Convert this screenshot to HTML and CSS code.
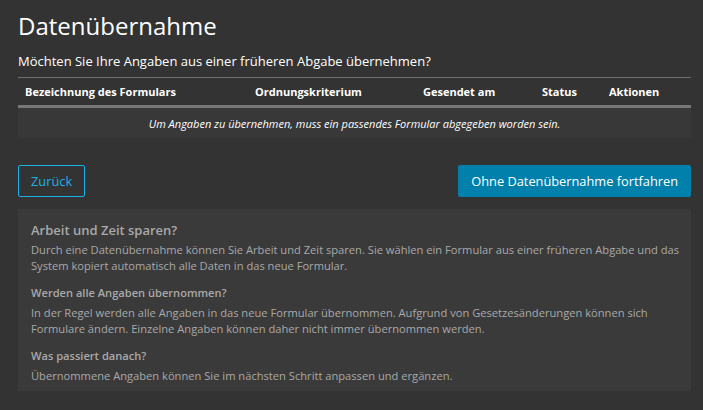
FILE: index.html
```html
<!DOCTYPE html>
<html lang="de">
<head>
    <meta charset="UTF-8">
    <meta name="viewport" content="width=device-width, initial-scale=1.0">
    <title>Datenübernahme</title>
    <link rel="stylesheet" href="styles.css">
</head>
<body>

    <div class="container">
        <h1>Datenübernahme</h1>
        <p class="question">Möchten Sie Ihre Angaben aus einer früheren Abgabe übernehmen?</p>

        <!-- Formular-Tabelle -->
        <table class="forms">
            <thead>
                <tr>
                    <th class="col-name">Bezeichnung des Formulars</th>
                    <th class="col-order">Ordnungskriterium</th>
                    <th class="col-date">Gesendet am</th>
                    <th class="col-status">Status</th>
                    <th class="col-actions">Aktionen</th>
                </tr>
            </thead>
            <tbody>
                <tr class="empty">
                    <td colspan="5">Um Angaben zu übernehmen, muss ein passendes Formular abgegeben worden sein.</td>
                </tr>
            </tbody>
        </table>

        <div class="actions">
            <button class="btn btn-outline">Zurück</button>
            <button class="btn btn-primary">Ohne Datenübernahme fortfahren</button>
        </div>

        <!-- Hinweise -->
        <div class="info">
            <h3>Arbeit und Zeit sparen?</h3>
            <p>Durch eine Datenübernahme können Sie Arbeit und Zeit sparen. Sie wählen ein Formular aus einer früheren Abgabe und das System kopiert automatisch alle Daten in das neue Formular.</p>
            <h4>Werden alle Angaben übernommen?</h4>
            <p>In der Regel werden alle Angaben in das neue Formular übernommen. Aufgrund von Gesetzesänderungen können sich Formulare ändern. Einzelne Angaben können daher nicht immer übernommen werden.</p>
            <h4>Was passiert danach?</h4>
            <p>Übernommene Angaben können Sie im nächsten Schritt anpassen und ergänzen.</p>
        </div>
    </div>

</body>
</html>
```

FILE: styles.css
```css
/* General Styles */
body {
    font-family: "Open Sans", Arial, sans-serif;
    background-color: #333333;
    color: #ffffff;
    margin: 0;
    padding: 0;
}

.container {
    padding: 9px 12px 0 18px;
}

h1 {
    font-size: 24px;
    font-weight: 400;
    margin: 0 0 8px 0;
    line-height: 34px;
}

.question {
    font-size: 13px;
    margin: 0 0 6px 0;
    line-height: 20px;
}

/* Table */
.forms {
    width: 100%;
    border-collapse: collapse;
    border-top: 1px solid #6e6e6e;
}

.forms th {
    font-size: 11px;
    font-weight: 700;
    text-align: left;
    padding: 6px 0 6px 0;
    line-height: 15px;
    border-bottom: 3px solid #777777;
}

.col-name {
    padding-left: 7px !important;
    width: 230px;
}

.col-order {
    width: 168px;
}

.col-date {
    width: 119px;
}

.col-status {
    width: 67px;
}

.forms td {
    font-size: 11px;
    font-style: italic;
    text-align: center;
    background-color: #383838;
    padding: 8px 0 6px 0;
    line-height: 16px;
}

/* Buttons */
.actions {
    display: flex;
    justify-content: space-between;
    margin-top: 27px;
}

.btn {
    font-family: "Open Sans", Arial, sans-serif;
    font-size: 12.8px;
    height: 32px;
    padding: 0 13px;
    border-radius: 2px;
    white-space: nowrap;
    cursor: pointer;
}

.btn-outline {
    background: transparent;
    color: #1cb2e8;
    border: 1px solid #1cb2e8;
    padding: 0 12px;
}

.btn-primary {
    background-color: #0080ab;
    color: #ffffff;
    border: none;
}

/* Info box */
.info {
    background-color: #3a3a3a;
    margin-top: 12px;
    padding: 12px 6px 7px 13px;
    color: #a9a9a9;
}

.info h3 {
    font-size: 13px;
    font-weight: 600;
    margin: 0 0 3px 0;
    line-height: 18px;
}

.info h4 {
    font-size: 11.1px;
    font-weight: 600;
    margin: 0 0 4px 0;
    line-height: 16px;
}

.info p {
    font-size: 11.15px;
    margin: 0 0 11px 0;
    line-height: 16px;
}

.info p:last-child {
    margin-bottom: 0;
}
```
